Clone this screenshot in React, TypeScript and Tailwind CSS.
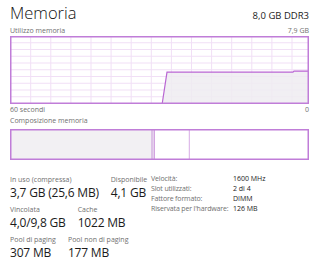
import React from "react";

const gridX = Array.from({ length: 14 }, (_, k) => 20.7 + 20.1 * k);
const gridY = Array.from({ length: 9 }, (_, k) => 6.75 * (k + 1));

const UsageChart: React.FC = () => (
  <svg width="299" height="68" viewBox="0 0 299 68" className="block">
    {gridX.map((x) => (
      <line key={`x${x}`} x1={x} y1="0" x2={x} y2="68" stroke="#f1dff6" strokeWidth="1" />
    ))}
    {gridY.map((y) => (
      <line key={`y${y}`} x1="0" y1={y} x2="299" y2={y} stroke="#f1dff6" strokeWidth="1" />
    ))}
    <polygon
      points="152.3,67 157,36.2 283,36.2 284,35.2 298,35.2 298,67"
      fill="#efecf1"
      fillOpacity="0.85"
    />
    <polyline
      points="152.3,67 157,36.2 283,36.2 284,35.2 298,35.2"
      fill="none"
      stroke="#b966d3"
      strokeWidth="1.2"
    />
    <rect x="0.75" y="0.75" width="297.5" height="66.5" fill="none" stroke="#c07dd8" strokeWidth="1.5" />
  </svg>
);

const CompositionBar: React.FC = () => (
  <svg width="299" height="31" viewBox="0 0 299 31" className="block">
    <rect x="0" y="0" width="141" height="31" fill="#f2f0f3" />
    <rect x="141" y="0" width="2.5" height="31" fill="#dcc1e6" />
    <line x1="144.3" y1="0" x2="144.3" y2="31" stroke="#c88ed9" strokeWidth="1" />
    <line x1="179.3" y1="0" x2="179.3" y2="31" stroke="#d8ace5" strokeWidth="1" />
    <rect x="0.75" y="0.75" width="297.5" height="29.5" fill="none" stroke="#c07dd8" strokeWidth="1.5" />
  </svg>
);

const Stat: React.FC<{ label: string; value: string }> = ({ label, value }) => (
  <div className="flex flex-col">
    <span className="text-[7px] leading-[9px] text-[#707070] whitespace-nowrap">{label}</span>
    <span className="text-[12px] leading-[14px] tracking-[-0.2px] text-[#1b1b1b] whitespace-nowrap mt-[2px]">
      {value}
    </span>
  </div>
);

const details = [
  ["Velocità:", "1600 MHz"],
  ["Slot utilizzati:", "2 di 4"],
  ["Fattore formato:", "DIMM"],
  ["Riservata per l'hardware:", "126 MB"],
];

export default function App() {
  return (
    <div
      className="w-[320px] h-[268px] bg-white px-[10px] overflow-hidden"
      style={{ fontFamily: '"Open Sans", "Noto Sans", sans-serif' }}
    >
      <div className="flex justify-between items-baseline pt-[3px] w-[299px]">
        <span className="text-[16.5px] leading-[20px] font-light text-[#111]">Memoria</span>
        <span className="text-[9.5px] leading-[12px] text-[#222]">8,0 GB DDR3</span>
      </div>

      <div className="flex justify-between mt-[2.5px] w-[299px] text-[7px] leading-[9px] text-[#707070]">
        <span>Utilizzo memoria</span>
        <span>7,9 GB</span>
      </div>
      <div className="mt-[1px]">
        <UsageChart />
      </div>
      <div className="flex justify-between mt-[1.5px] w-[299px] text-[7px] leading-[9px] text-[#707070]">
        <span>60 secondi</span>
        <span>0</span>
      </div>

      <div className="mt-[2px] text-[7px] leading-[9px] text-[#707070]">Composizione memoria</div>
      <div className="mt-[3.5px]">
        <CompositionBar />
      </div>

      <div className="flex items-start mt-[15px]">
        <div className="w-[141px] shrink-0 flex flex-col gap-[5px]">
          <div className="flex gap-3">
            <Stat label="In uso (compressa)" value="3,7 GB (25,6 MB)" />
            <Stat label="Disponibile" value="4,1 GB" />
          </div>
          <div className="flex gap-3">
            <Stat label="Vincolata" value="4,0/9,8 GB" />
            <Stat label="Cache" value="1022 MB" />
          </div>
          <div className="flex gap-3">
            <Stat label="Pool di paging" value="307 MB" />
            <Stat label="Pool non di paging" value="177 MB" />
          </div>
        </div>
        <div className="grid grid-cols-[82px_auto] content-start text-[7px] leading-[10px] -mt-[0.5px]">
          {details.map(([k, v]) => (
            <React.Fragment key={k}>
              <span className="text-[#707070] whitespace-nowrap tracking-[-0.15px]">{k}</span>
              <span className="text-[#1b1b1b] whitespace-nowrap">{v}</span>
            </React.Fragment>
          ))}
        </div>
      </div>
    </div>
  );
}
